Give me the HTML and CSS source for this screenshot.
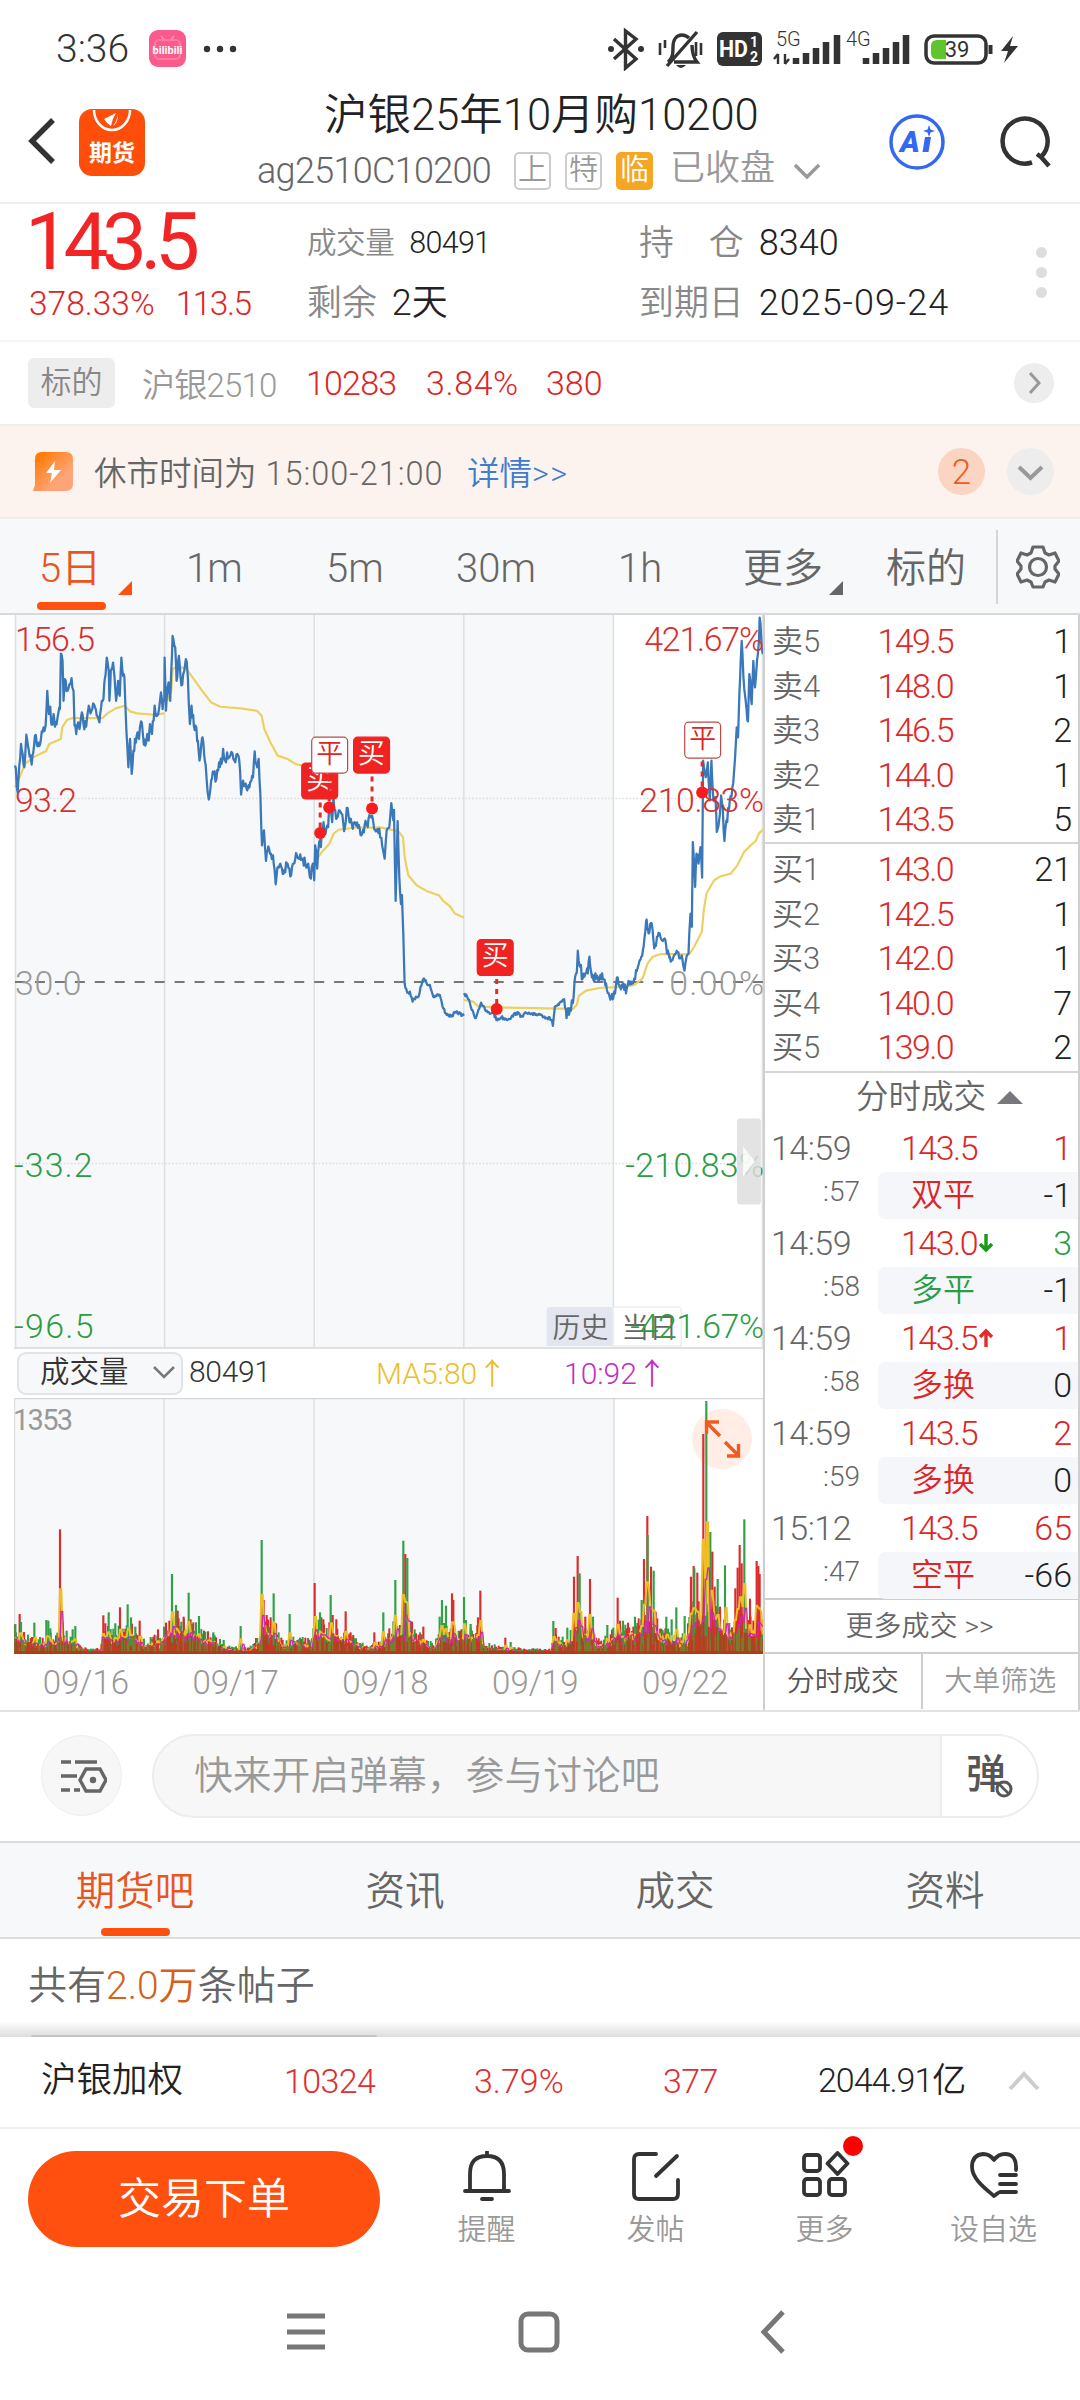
FILE: index.html
```html
<!DOCTYPE html>
<html lang="zh-CN">
<head>
  <meta charset="UTF-8">
  <title>沪银25年10月购10200</title>
  <link rel="stylesheet" href="styles.css">
</head>
<body>

<!-- Status bar -->
<div class="status">
  <span class="time">3:36</span>
  <svg class="bili" width="37" height="37" viewBox="0 0 37 37">
    <rect width="37" height="37" rx="9" fill="#fb5a8d"/>
    <path d="M12 6l4 5M25 6l-4 5" stroke="#fd8db0" stroke-width="2"/>
    <rect x="6" y="10" width="25" height="19" rx="4" fill="none" stroke="#fd7ba4" stroke-width="2"/>
    <text x="18.500" y="24" text-anchor="middle" font-size="11" font-weight="700" fill="#fff">bilibili</text>
  </svg>
  <svg class="more-dots" width="34" height="8"><g fill="#333"><circle cx="4" cy="4" r="3.200"/><circle cx="17" cy="4" r="3.200"/><circle cx="30" cy="4" r="3.200"/></g></svg>
  <svg class="sys" width="420" height="44" viewBox="600 27 420 44">
    <g fill="none" stroke="#333" stroke-width="3.400">
      <path d="M614 39l22 20-10.500 9V31l10.500 8-22 20"/>
      <path d="M668 62c5-4 5-9 5-15 0-8 4-12 9-12 3 0 5 1 7 3M692 45c0 8 1 12 5 17h-23M697 32l-30 34"/>
      <path d="M660 43v12M665 40v8M696 42v14M701 43v12" stroke-width="2.600"/>
    </g>
    <circle cx="611" cy="49" r="3" fill="#333"/><circle cx="641" cy="49" r="3" fill="#333"/>
    <path d="M676 65h10q-5 6-10 0z" fill="#333"/>
    <rect x="717" y="32" width="45" height="34" rx="6" fill="#333"/>
    <text x="719" y="57" font-size="23" font-weight="700" fill="#fff" textLength="29" lengthAdjust="spacingAndGlyphs">HD</text>
    <text x="750" y="47" font-size="14" font-weight="700" fill="#fff">1</text>
    <text x="750" y="62" font-size="14" font-weight="700" fill="#fff">2</text>
    <text x="776" y="46" font-size="20" fill="#333">5G</text>
    <text x="846" y="46" font-size="20" fill="#333">4G</text>
    <path d="M778 54v10M778 54l-4 5M785 64V54M785 64l4-5" stroke="#333" stroke-width="2.400" fill="none"/>
    <g stroke="#333" stroke-width="6.500">
      <path d="M796 64v-6M806 64V53M816 64V48M826 64V42M837 64V35"/>
      <path d="M866 64v-6M876 64V53M886 64V48M896 64V42M906 64V35"/>
    </g>
    <rect x="926" y="36" width="60" height="27" rx="8" fill="#fff" stroke="#333" stroke-width="3.500"/>
    <path d="M937 40h9v19h-9q-6 0-6-6v-7q0-6 6-6z" fill="#5fc52e"/>
    <path d="M990.500 45v9" stroke="#333" stroke-width="4"/>
    <text x="957" y="57" text-anchor="middle" font-size="22" font-weight="400" fill="#333">39</text>
    <path d="M1013 36l-12 15h7l-4 12 14-17h-8z" fill="#333"/>
  </svg>
</div>

<!-- Title -->
<header class="header">
  <svg class="back" width="30" height="52" viewBox="0 0 30 52"><path d="M25 4L4 25l21 21" fill="none" stroke="#333" stroke-width="5.500"/></svg>
  <svg class="logo" width="66" height="68" viewBox="0 0 66 68">
    <rect width="66" height="67" rx="13" fill="#ff4e0a"/>
    <path d="M15 1a18 20 0 0 0 36 0" fill="none" stroke="#fff" stroke-width="2.500"/>
    <path d="M25 10l12-6q-4 6-5 13-4-2-7-7zM39 5q-1 7-5 12 5-3 5-12z" fill="#fff"/>
    <text x="33" y="52" text-anchor="middle" font-size="23" font-weight="700" fill="#fff">期货</text>
  </svg>
  <div class="names">
    <h1>沪银25年10月购10200</h1>
    <div class="code">
      <span class="ticker">ag2510C10200</span>
      <i class="tag">上</i><i class="tag">特</i><i class="tag temp">临</i>
      <span class="closed">已收盘</span>
      <svg width="28" height="18" viewBox="0 0 28 18"><path d="M2 3l12 12L26 3" fill="none" stroke="#999" stroke-width="3.500"/></svg>
    </div>
  </div>
  <svg class="ai" width="56" height="56" viewBox="0 0 56 56">
    <circle cx="28" cy="28" r="26" fill="none" stroke="#3468f0" stroke-width="3.500"/>
    <text x="11" y="38" font-size="30" font-weight="900" font-style="italic" fill="#3468f0">A</text>
    <path d="M36 23h6l-2.500 15h-6z" fill="#3468f0"/>
    <path d="M40 11l1.500 4.500L46 17l-4.500 1.500L40 23l-1.500-4.500L34 17l4.500-1.500z" fill="#3468f0"/>
  </svg>
  <svg class="search" width="54" height="54" viewBox="0 0 54 54"><path d="M33 47.500A22.500 22.500 0 1 1 42 42l-4-3M42 42l8 9" fill="none" stroke="#333" stroke-width="4.500"/></svg>
</header>

<!-- Quote -->
<section class="quote">
  <div class="last">
    <div class="price">143.5</div>
    <div class="change"><span>378.33%</span><span class="diff">113.5</span></div>
  </div>
  <div class="facts">
    <div class="small"><label>成交量</label>80491</div>
    <div><label>剩余</label>2天</div>
  </div>
  <div class="facts wide">
    <div><label>持　仓</label>8340</div>
    <div><label>到期日</label><span class="expiry">2025-09-24</span></div>
  </div>
  <div class="kebab"><i></i><i></i><i></i></div>
</section>

<section class="underlying">
  <span class="chip">标的</span>
  <span class="uname">沪银2510</span>
  <span class="red u1">10283</span><span class="red u2">3.84%</span><span class="red">380</span>
  <svg class="go" width="40" height="40" viewBox="0 0 40 40"><circle cx="20" cy="20" r="20" fill="#ededed"/><path d="M16 10l9 10-9 10" fill="none" stroke="#999" stroke-width="3"/></svg>
</section>

<section class="notice">
  <svg width="41" height="40" viewBox="0 0 41 40">
    <defs><linearGradient id="g" x1="0" y1="0" x2="1" y2="1"><stop offset=".1" stop-color="#ff7a00"/><stop offset=".7" stop-color="#ffa478"/></linearGradient></defs>
    <path d="M9 0h24q7 0 7 7v25q0 7-7 7H0l2-6V7q0-7 7-7z" fill="url(#g)"/>
    <path d="M22 9l-9 12h6l-2 10 11-13h-7z" fill="#fff"/>
  </svg>
  <span class="msg">休市时间为 <span class="hours">15:00-21:00</span></span>
  <a class="detail">详情<span>&gt;&gt;</span></a>
  <b class="count">2</b>
  <svg width="47" height="47" viewBox="0 0 47 47"><circle cx="23.500" cy="23.500" r="23.500" fill="#ededed"/><path d="M12 19l11.500 11L35 19" fill="none" stroke="#999" stroke-width="4"/></svg>
</section>

<!-- Periods -->
<nav class="periods">
  <a class="p1 on">5日<i class="corner"></i></a>
  <a class="p2">1m</a>
  <a class="p3">5m</a>
  <a class="p4">30m</a>
  <a class="p5">1h</a>
  <a class="p6">更多<i class="corner"></i></a>
  <a class="p7">标的</a>
  <span class="gear">
    <svg width="44" height="46" viewBox="-22 -23 44 46" fill="none" stroke="#666" stroke-width="3.200" stroke-linejoin="round">
      <path d="M-5-20H5l2 6 4 2 6-2 4 8-4 5v3l4 5-4 8-6-2-4 2-2 5H-5l-2-5-4-2-6 2-4-8 4-5v-3l-4-5 4-8 6 2 4-2z"/><circle r="8.500"/>
    </svg>
  </span>
</nav>

<main class="board">
  <div class="charts">
    <svg class="trend" width="750" height="734" viewBox="0 0 750 734">
      <rect width="600" height="734" fill="#f7f8fa"/>
      <path d="M.5 0v734M150 0v734M300 0v734M450 0v734M600 0v734M749.500 0v734" stroke="#dfe0e2" stroke-width="1.600"/>
      <path d="M0 184h750M0 550h750" stroke="#dcdcdc" stroke-width="1.500" stroke-dasharray="1.500 2"/>
      <path d="M0 368h750" stroke="#777" stroke-width="2" stroke-dasharray="10 10"/>
      <g class="axis">
        <text class="up" x="0" y="36">156.5</text><text class="up" x="0" y="198">93.2</text>
        <text x="0" y="381" textLength="66">30.0</text>
        <text class="down" x="-1" y="564" textLength="78">-33.2</text><text class="down" x="-1" y="725" textLength="79">-96.5</text>
      </g>
      <g transform="translate(-14 -14) scale(.33333)" fill="none" stroke-linejoin="round">
        <g id="avg" stroke="#ecd060" stroke-width="6.500"></g>
        <g id="line" stroke="#3a78ba" stroke-width="6.800"></g>
      </g>
      <g class="axis end">
        <text class="up" x="751" y="36" textLength="120">421.67%</text><text class="up" x="751" y="198" textLength="125">210.83%</text>
        <text x="751" y="381" textLength="95">0.00%</text>
      </g>
      <g id="marks"></g>
      <path d="M537 694h62v39h-66v-35q0-4 4-4z" fill="#e3e6ee"/>
      <path d="M600 694h64q4 0 4 4v35h-68z" fill="#fff" stroke="#eee" stroke-width="1.500"/>
      <g font-size="28" fill="#666"><text x="539" y="725">历史</text><text x="608" y="725">当日</text></g>
      <g class="axis end"><text class="down" x="751" y="564" textLength="139">-210.83%</text><text class="down" x="751" y="725" textLength="134">-421.67%</text></g>
      <rect x="724" y="505" width="24" height="86" rx="3" fill="#ddd" fill-opacity=".82"/>
      <path d="M730 533l12 15-12 15z" fill="#fff" fill-opacity=".8"/>
    </svg>
    <div class="indicator">
      <span class="select">成交量<svg width="22" height="13" viewBox="0 0 22 13"><path d="M1 1l10 10L21 1" fill="none" stroke="#777" stroke-width="2.500"/></svg></span>
      <span class="vol">80491</span><span class="ma5">MA5:80<em>↑</em></span><span class="ma10">10:92<em>↑</em></span>
    </div>
    <svg class="volume" width="750" height="256" viewBox="0 0 750 256">
      <rect width="600" height="256" fill="#f7f8fa"/>
      <path d="M.5 0v256M150 0v256M300 0v256M450 0v256M600 0v256M749.500 0v256" stroke="#dfe0e2" stroke-width="1.600"/>
      <path d="M0 .5h750" stroke="#d5d6d8" stroke-width="1.500"/>
      <text x="-1" y="32" font-size="29" font-weight="400" fill="#999" textLength="60">1353</text>
      <circle cx="708" cy="41" r="30" fill="#ffede6"/>
      <g id="bars" transform="translate(-14 -18) scale(.33333)" fill="none"></g>
      <path d="M706 38l-13-13M692.500 36V24H705M711 44l14 14M713 58h11.500V46" fill="none" stroke="#f15a22" stroke-width="3.400"/>
    </svg>
    <div class="dates"><span>09/16</span><span>09/17</span><span>09/18</span><span>09/19</span><span>09/22</span></div>
  </div>

  <aside class="depth">
    <div class="levels asks">
      <p><span>卖5</span><b>149.5</b><em>1</em></p>
      <p><span>卖4</span><b>148.0</b><em>1</em></p>
      <p><span>卖3</span><b>146.5</b><em>2</em></p>
      <p><span>卖2</span><b>144.0</b><em>1</em></p>
      <p><span>卖1</span><b>143.5</b><em>5</em></p>
    </div>
    <div class="levels bids">
      <p><span>买1</span><b>143.0</b><em>21</em></p>
      <p><span>买2</span><b>142.5</b><em>1</em></p>
      <p><span>买3</span><b>142.0</b><em>1</em></p>
      <p><span>买4</span><b>140.0</b><em>7</em></p>
      <p><span>买5</span><b>139.0</b><em>2</em></p>
    </div>
    <div class="ticks">
      <h3>分时成交<i></i></h3>
      <div class="tick"><span>14:59</span><b>143.5</b><em class="red">1</em></div>
      <div class="tick sub"><span>:57</span><p><b>双平</b><em>-1</em></p></div>
      <div class="tick"><span>14:59</span><b>143.0</b><svg class="dir" width="16" height="20" viewBox="0 0 16 20"><path d="M8 1v16M2 11l6 6 6-6" fill="none" stroke="#189a18" stroke-width="3.400"/></svg><em class="green">3</em></div>
      <div class="tick sub"><span>:58</span><p><b class="green">多平</b><em>-1</em></p></div>
      <div class="tick"><span>14:59</span><b>143.5</b><svg class="dir" width="16" height="20" viewBox="0 0 16 20"><path d="M8 19V3M2 9l6-6 6 6" fill="none" stroke="#e22b2b" stroke-width="3.400"/></svg><em class="red">1</em></div>
      <div class="tick sub"><span>:58</span><p><b>多换</b><em>0</em></p></div>
      <div class="tick"><span>14:59</span><b>143.5</b><em class="red">2</em></div>
      <div class="tick sub"><span>:59</span><p><b>多换</b><em>0</em></p></div>
      <div class="tick"><span>15:12</span><b>143.5</b><em class="red">65</em></div>
      <div class="tick sub"><span>:47</span><p><b>空平</b><em>-66</em></p></div>
    </div>
    <div class="all">更多成交 &gt;&gt;</div>
    <div class="switch"><span class="on">分时成交</span><span>大单筛选</span></div>
  </aside>
</main>

<!-- Danmaku input -->
<section class="danmu">
  <span class="settings"><svg width="46" height="36" viewBox="0 0 46 36" fill="none" stroke="#666" stroke-width="3.400"><path d="M0 4h10M14 4h22M0 18h16M0 32h9M13 32h6M25 11h14l6 11-6 11H25l-6-11z"/><circle cx="32" cy="22" r="1.500"/></svg></span>
  <div class="pill">
    <span class="hint">快来开启弹幕，参与讨论吧</span>
    <span class="off">弹<svg width="20" height="20" viewBox="0 0 20 20"><circle cx="10" cy="10" r="7" fill="#fff" stroke="#555" stroke-width="3"/><path d="M5 5l10 10" stroke="#555" stroke-width="2.600"/></svg></span>
  </div>
</section>

<nav class="forum">
  <a class="on">期货吧</a><a>资讯</a><a>成交</a><a>资料</a>
</nav>
<section class="posts">共有<span>2.0万</span>条帖子<i class="fade"></i></section>

<!-- Index strip -->
<section class="strip">
  <span class="s1">沪银加权</span><span class="s2">10324</span><span class="s3">3.79%</span><span class="s4">377</span><span class="s5">2044.91亿</span>
  <svg width="32" height="20" viewBox="0 0 32 20"><path d="M2 18L16 3l14 15" fill="none" stroke="#ccc" stroke-width="4"/></svg>
</section>

<footer class="actions">
  <button>交易下单</button>
  <div class="act"><svg width="50" height="52" viewBox="0 0 50 52"><path d="M8 40V23Q8 5 25 5t17 18v17M3 40h44M25 1v4M20 48h10"/></svg>提醒</div>
  <div class="act"><svg width="50" height="52" viewBox="0 0 50 52"><path d="M25 3H8Q3 3 3 8v35q0 5 5 5h34q5 0 5-5V29M46 5L25 25"/></svg>发帖</div>
  <div class="act"><svg width="50" height="52" viewBox="0 0 50 52"><rect x="4" y="4" width="16" height="16" rx="3"/><rect x="4" y="28" width="16" height="16" rx="3"/><rect x="29" y="28" width="16" height="16" rx="3"/><path d="M37.500 2l10 10.500-10 10.500-10-10.500z"/></svg>更多<i class="dot"></i></div>
  <div class="act"><svg width="50" height="52" viewBox="0 0 50 52"><path d="M47 19Q48 3 36 3q-7 0-11 6-4-6-11-6Q3 4 3 16c0 12 14 22 22 29l4-3M31 24h16M31 33h16M31 41h16"/></svg>设自选</div>
</footer>

<div class="sysnav">
  <svg width="506" height="48" viewBox="0 0 506 48" fill="none" stroke="#777" stroke-width="5">
    <path d="M4 8h38M4 24h38M4 39h38"/><rect x="238" y="6" width="36" height="36" rx="7"/><path d="M500 4L481 24l19 20"/>
  </svg>
</div>

<script src="chart.js"></script>
</body>
</html>
```

FILE: styles.css
```css
* {
  box-sizing: border-box;
}

body {
  width: 1080px;
  margin: 0;
  background: #fff;
  color: #222;
  font-family: Roboto, "Noto Sans CJK SC", sans-serif;
  font-weight: 350;
  font-size: 34px;
}

h1, h3, p {
  margin: 0;
  font-weight: 350;
}

i, em {
  font-style: normal;
}

b {
  font-weight: 350;
}

svg {
  flex: none;
}

.red { color: #dc2626; }
.green { color: #2c9c44 !important; }

/* status bar */
.status {
  display: flex;
  align-items: center;
  height: 97px;
  padding: 0 60px 0 56px;
}

.time {
  width: 93px;
  font-size: 39px;
  color: #333;
}

.more-dots {
  margin: 0 auto 0 17px;
}

/* header */
.header {
  display: flex;
  align-items: flex-start;
  height: 107px;
  border-bottom: 2px solid #eee;
}

.back { margin: 19px 19px 0 28px; }
.logo { margin: 12px 0 0 2px; }

.names {
  width: 744px;
  padding-left: 112px;
}

.names h1 {
  margin-left: 67px;
  height: 50px;
  line-height: 37px;
  font-size: 43.500px;
  color: #222;
  white-space: nowrap;
}

.code {
  display: flex;
  align-items: center;
  height: 48px;
  color: #666;
}

.ticker {
  width: 257px;
  font-size: 36px;
  letter-spacing: -.7px;
}

.tag {
  width: 37px;
  height: 38px;
  margin-right: 14px;
  border: 2px solid #ccc;
  border-radius: 5px;
  line-height: 33px;
  text-align: center;
  font-size: 29px;
  color: #999;
}

.tag.temp {
  margin-right: 17px;
  border-color: #f5a623;
  background: #f5a623;
  color: #fff;
}

.closed {
  width: 123px;
  line-height: 44px;
  padding-bottom: 4px;
  font-size: 35px;
  color: #999;
}

.ai { margin-top: 17px; }
.search { margin: 18px 0 0 54px; }

/* quote */
.quote {
  display: flex;
  height: 138px;
  border-bottom: 2px solid #f4f4f4;
}

.last {
  width: 307px;
  padding-left: 25px;
}

.price {
  height: 73px;
  line-height: 76px;
  font-size: 80px;
  font-weight: 450;
  letter-spacing: -6.500px;
  color: #f12525;
}

.change {
  display: flex;
  gap: 21px;
  padding-left: 4px;
  line-height: 54px;
  font-size: 33.500px;
  color: #dc2626;
}

.diff { letter-spacing: -1.500px; }

.facts {
  width: 332px;
  padding-top: 9px;
}

.facts.wide { width: 391px; }

.facts div {
  height: 60px;
  line-height: 60px;
  font-size: 36px;
  white-space: nowrap;
}

.facts .small { font-size: 30.500px; letter-spacing: -.7px; }
.facts .small label { letter-spacing: -.5px; }
.facts label { margin-right: 15px; color: #888; font-size: .97em; }
.expiry { letter-spacing: 1px; }

.kebab {
  display: flex;
  flex-direction: column;
  gap: 9px;
  padding: 43px 0 0 6px;
}

.kebab i {
  width: 11px;
  height: 11px;
  border-radius: 50%;
  background: #ddd;
}

.underlying {
  display: flex;
  align-items: center;
  height: 84px;
  padding: 0 26px 0 28px;
  border-bottom: 2px solid #eee;
}

.chip {
  width: 87px;
  height: 50px;
  margin-right: 27px;
  border-radius: 6px;
  background: #ededed;
  line-height: 49px;
  text-align: center;
  font-size: 31px;
  color: #888;
}

.uname { width: 164px; font-size: 33px; letter-spacing: -.8px; color: #999; }
.u1 { width: 120px; letter-spacing: -.8px; }
.u2 { width: 120px; letter-spacing: .6px; }
.go { margin-left: auto; }

/* notice */
.notice {
  display: flex;
  align-items: center;
  height: 93px;
  padding: 0 26px 0 33px;
  background: #fdf3ee;
  border-bottom: 2px solid #eee;
}

.msg, .detail { padding-bottom: 3px; }
.msg { width: 373px; margin-left: 20px; color: #666; font-size: 32.500px; white-space: nowrap; }
.hours { margin-left: 1px; letter-spacing: 1px; }
.detail { color: #3d7dcc; font-size: 32.500px; }
.detail span { letter-spacing: 1.500px; }

.count {
  width: 47px;
  height: 47px;
  margin: 0 22px 0 auto;
  border-radius: 50%;
  background: #fbd5c2;
  line-height: 49px;
  text-align: center;
  color: #f15a22;
  font-size: 35px;
}

/* periods */
.periods {
  display: flex;
  height: 96px;
  background: #f7f8fa;
  border-bottom: 2px solid #d8d9dc;
  font-size: 40px;
  color: #666;
}

.periods a {
  position: relative;
  line-height: 99px;
  white-space: nowrap;
}

.p1 { width: 147px; padding-left: 39px; }
.p2 { width: 139px; padding-left: 39px; letter-spacing: -1px; }
.p3 { width: 130px; padding-left: 40px; }
.p4 { width: 163px; padding-left: 40px; }
.p5 { width: 164px; padding-left: 39px; }
.p6 { width: 143px; }
.p7 { width: 110px; }

.periods .on { color: #e8551f; }

.periods .on::after {
  content: "";
  position: absolute;
  left: 37px;
  bottom: 3px;
  width: 69px;
  height: 8px;
  border-radius: 5px;
  background: #ff500f;
}

.corner {
  position: absolute;
  left: 86px;
  top: 62px;
  border-left: 14px solid transparent;
  border-bottom: 14px solid #666;
}

.on .corner { left: 118px; border-bottom-color: #ff500f; }

.gear {
  width: 82px;
  height: 74px;
  margin-top: 11px;
  padding: 14px 0 0 18px;
  border-left: 2px solid #d5d6d8;
}

/* charts */
.board {
  display: flex;
  height: 1097px;
  border-bottom: 2px solid #e2e2e2;
}

.charts {
  width: 763px;
  padding-left: 14px;
}

.charts svg {
  display: block;
}

.trend { border-bottom: 2px solid #dfe0e2; }

.axis text {
  font-size: 34px;
  letter-spacing: -.8px;
  fill: #999;
}

.axis.end text { text-anchor: end; letter-spacing: 0; }
.axis .up { fill: #d82f2f; }
.axis .down { fill: #2c9c44; }

.indicator {
  display: flex;
  align-items: center;
  height: 49px;
  padding-bottom: 1px;
  line-height: 40px;
  font-size: 30px;
  color: #333;
}

.indicator > span { padding-bottom: 2px; }

.select {
  display: flex;
  align-items: center;
  gap: 24px;
  width: 166px;
  height: 43px;
  margin: 0 6px 0 3px;
  padding-left: 21px;
  border: 2px solid #e1e3e8;
  border-radius: 9px;
  background: #f7f8fa;
  font-size: 29.500px;
}

.vol { width: 187px; letter-spacing: -.3px; }
.ma5 { width: 188px; color: #e9bf2c; }
.ma10 { color: #c030c0; }
.indicator em { font-family: "Noto Sans CJK SC"; letter-spacing: -8px; }

.dates {
  display: flex;
  height: 56px;
  line-height: 57px;
  color: #999;
}

.dates span {
  width: 150px;
  padding-right: 6px;
  text-align: center;
  font-size: 33px;
}

/* depth */
.depth {
  width: 317px;
  border: solid #cfcfcf;
  border-width: 0 2px;
}

.levels {
  height: 229px;
  border-bottom: 2px solid #d5d5d5;
}

.asks { padding-top: 4px; }
.bids { padding-top: 3px; }

.levels p {
  display: flex;
  height: 44.500px;
  line-height: 45px;
}

.levels span { width: 71px; padding-left: 7px; color: #666; font-size: 31px; }
.levels b { width: 117px; text-align: right; color: #dc2a2a; letter-spacing: -1.600px; }
.levels em { width: 119px; text-align: right; }

.ticks {
  height: 527px;
  border-bottom: 2px solid #cfcfcf;
}

.ticks h3 {
  display: flex;
  align-items: center;
  height: 51px;
  padding: 0 0 2px 91px;
  line-height: 49px;
  font-size: 32.500px;
  color: #666;
}

.ticks h3 i {
  margin-left: 11px;
  border: solid transparent;
  border-width: 0 13px 13px;
  border-bottom-color: #77777c;
}

.tick {
  position: relative;
  display: flex;
  height: 48px;
  line-height: 49px;
}

.tick > span { width: 95px; padding-left: 6px; color: #666; letter-spacing: -.5px; }
.tick > b { width: 117px; text-align: right; color: #dc2626; letter-spacing: -1.500px; }
.tick > em { margin-left: auto; padding-right: 6px; }

.dir {
  position: absolute;
  left: 213px;
  top: 14px;
}

.tick.sub { height: 47px; line-height: 46px; }
.tick.sub > span { line-height: 40px; font-size: 28px; text-align: right; letter-spacing: 0; }

.sub p {
  display: flex;
  justify-content: space-between;
  width: 200px;
  margin-left: 18px;
  padding: 0 6px 0 33px;
  border-radius: 7px 0 0 7px;
  background: #f5f6f9;
}

.sub p b { color: #dc2626; font-size: 32px; }

.all {
  height: 54px;
  border-bottom: 2px solid #cfcfcf;
  line-height: 53px;
  padding-right: 4px;
  text-align: center;
  font-size: 28px;
  color: #666;
}

.switch { display: flex; }

.switch span {
  flex: 1;
  height: 55px;
  line-height: 56px;
  text-align: center;
  font-size: 28px;
  color: #999;
}

.switch .on {
  border-right: 2px solid #cfcfcf;
  color: #555;
}

/* danmaku */
.danmu {
  display: flex;
  align-items: center;
  gap: 30px;
  height: 131px;
  padding: 0 41px 2px;
  border-bottom: 2px solid #dcdde0;
}

.settings {
  width: 81px;
  height: 81px;
  padding: 22px 0 0 19px;
  border: 1px solid #eee;
  border-radius: 50%;
  background: #f7f7f7;
}

.pill {
  display: flex;
  width: 887px;
  height: 84px;
  border: 2px solid #ededed;
  border-radius: 42px;
  background: #f7f7f7;
  overflow: hidden;
}

.hint {
  width: 786px;
  padding-left: 40px;
  line-height: 80px;
  font-size: 38.800px;
  color: #999;
}

.off {
  position: relative;
  flex: 1;
  padding-left: 24px;
  border-left: 2px solid #ededed;
  background: #fff;
  line-height: 78px;
  font-size: 40px;
  font-weight: 500;
  color: #555;
}

.off svg {
  position: absolute;
  left: 52px;
  top: 43px;
}

.forum {
  display: flex;
  height: 96px;
  background: #f7f8fa;
  border-bottom: 2px solid #dcdde0;
}

.forum a {
  position: relative;
  width: 270px;
  line-height: 97px;
  text-align: center;
  font-size: 39.500px;
  color: #666;
}

.forum .on { color: #e8551f; }

.forum .on::after {
  content: "";
  position: absolute;
  left: 101px;
  bottom: 1px;
  width: 69px;
  height: 8px;
  border-radius: 4px;
  background: #ff500f;
}

.posts {
  position: relative;
  height: 98px;
  padding-left: 28px;
  line-height: 95px;
  font-size: 39px;
  color: #666;
}

.posts span { color: #d4601c; }

.fade {
  position: absolute;
  left: 0;
  bottom: 0;
  width: 1080px;
  height: 16px;
  background: linear-gradient(#fff, #ddd);
}

.fade::after {
  content: "";
  position: absolute;
  left: 31px;
  bottom: 0;
  width: 346px;
  height: 2px;
  border-radius: 3px 3px 0 0;
  background: #c4c4c4;
}

/* index strip */
.strip {
  display: flex;
  align-items: center;
  height: 92px;
  padding: 0 0 2px 41px;
  border-bottom: 2px solid #eee;
  line-height: 60px;
  letter-spacing: -.6px;
}

.s1 { width: 243px; padding-bottom: 3px; font-size: 35.500px; letter-spacing: 0; }
.s2 { width: 190px; color: #dc3030; }
.s3 { width: 189px; color: #dc3030; letter-spacing: 0; }
.s4 { width: 155px; color: #dc3030; }
.s5 { width: 190px; padding-bottom: 3px; letter-spacing: -1px; }

.actions {
  display: flex;
  height: 142px;
  padding: 22px 0 0 28px;
}

.actions button {
  width: 352px;
  height: 96px;
  margin-right: 22px;
  border: none;
  border-radius: 49px;
  background: #ff500f;
  font: inherit;
  font-size: 43px;
  line-height: 88px;
  color: #fff;
}

.act {
  position: relative;
  display: flex;
  flex-direction: column;
  align-items: center;
  width: 169px;
  font-size: 29px;
  line-height: 54px;
  color: #999;
}

.act svg {
  fill: none;
  stroke: #333;
  stroke-width: 3.800;
  stroke-linecap: round;
  stroke-linejoin: round;
}

.dot {
  position: absolute;
  left: 103px;
  top: -15px;
  width: 20px;
  height: 20px;
  border-radius: 50%;
  background: #f00;
}

.sysnav {
  padding: 37px 0 0 283px;
}
```

FILE: chart.js
```js
// series use a grid of three units per pixel
var NS = "http://www.w3.org/2000/svg";
var seed = 7;
function rnd() {
  seed = (seed * 16807) % 2147483647;
  return seed / 2147483647;
}
function add(parent, tag, attrs, text) {
  var el = document.createElementNS(NS, tag);
  for (var k in attrs) el.setAttribute(k, attrs[k]);
  if (text) el.textContent = text;
  document.getElementById(parent).appendChild(el);
}

var price = [
  "42,495 50,575 60,430 70,500 76,402 92,492 102,405 108,435 120,415 128,380 134,375 139,270 144,340 148,318 152,372 158,340 162,378 170,350 177,325 180,158 185,180 188,300 192,235 200,270 206,250 212,232 218,270 221,375 226,400 232,365 236,385 243,335 248,370 256,378 264,315 272,330 280,312 288,345 296,365 303,300 308,295 312,235 318,170 324,210 326,300 330,210 337,185 341,225 346,300 352,240 357,285 362,170 367,225 371,230 377,390 383,500 388,415 393,520 398,450 408,405 415,415 421,362 427,405 434,435 440,400 444,420 448,370 454,400 462,315 470,345 481,275 486,325 491,300 492,170 496,330 504,245 509,300 516,105 524,140 528,240 535,165 540,230 545,252 551,210 556,175 562,230 568,370 573,315 580,375 585,375 592,420 597,480 606,410 613,480 619,545 625,597 632,540 640,520 648,535 656,485 663,490 668,445 674,480 680,455 688,468 696,458 702,480 708,462 714,465 719,510 722,582 728,540 742,565 753,540 758,530 763,452 768,490 775,475 780,580 785,735 791,690 797,782 804,738 812,760 818,765 826,852 833,800 840,790 850,820 862,790 870,828 880,790 890,765 900,762 908,775 916,795 924,790 932,835 938,790 942,840 945,735 951,805 957,725 962,740 970,665 976,700 984,680 988,610 996,665 1000,590 1008,655 1016,630 1024,640 1032,692 1040,622 1046,650 1052,655 1058,685 1066,668 1074,682 1084,705 1094,672 1103,680 1111,648 1120,668 1130,690 1138,685 1144,712 1154,775 1160,690 1168,680 1174,608 1180,660 1182,628 1187,902 1193,662 1198,830 1203,912 1206,885 1210,1000 1214,1150 1222,1178 1230,1175 1238,1205 1248,1190 1256,1190 1262,1160 1272,1135 1280,1150 1290,1155 1300,1190 1310,1185 1320,1185 1328,1220 1338,1240 1354,1250 1366,1238 1380,1240 1392,1248",
  "1392,1185 1402,1190 1408,1200 1416,1230 1428,1255 1436,1230 1444,1208 1456,1230 1470,1242 1480,1235 1490,1260 1505,1252 1520,1258 1535,1252 1550,1238 1565,1248 1580,1240 1600,1245 1620,1242 1635,1250 1657,1260 1660,1278 1666,1220 1678,1215 1694,1198 1701,1255 1712,1225 1720,1210 1727,1130 1732,1118 1735,1052 1742,1100 1750,1135 1758,1120 1765,1120 1770,1070 1775,1115 1782,1140 1788,1120 1798,1145 1808,1120 1820,1150 1828,1180 1842,1192 1850,1155 1855,1132 1862,1160 1872,1150 1880,1180 1892,1145 1905,1135 1916,1100 1926,1070 1933,1040 1942,958 1948,1000 1955,968 1960,990 1965,1045 1973,1010 1981,1000 1988,1020 1996,1015 2003,1060 2012,1070 2020,1080 2030,1060 2040,1075 2050,1080 2056,1112 2062,1070 2068,1060 2074,940 2078,980 2081,725 2088,860 2092,760 2098,790 2104,740 2109,832 2112,480 2120,530 2126,485 2132,600 2137,480 2143,600 2149,590 2153,695 2160,660 2166,585 2171,620 2176,722 2182,660 2190,625 2200,560 2206,500 2213,380 2217,410 2221,280 2225,180 2228,120 2233,225 2240,300 2247,362 2251,220 2258,310 2263,180 2268,260 2274,180 2280,120 2282,50 2288,130 2292,160"
];
var avg = [
  "42,560 60,520 72,490 100,468 135,452 145,430 180,415 184,380 198,358 215,352 305,352 320,338 345,323 372,315 388,332 410,338 460,342 492,338",
  "500,300 512,270 516,205 528,198 555,202 580,235 605,270 632,305 660,318 720,323 770,330 784,345 792,385 810,425 832,465 862,475 885,490 905,495 935,497",
  "945,785 965,755 988,730 1000,700 1015,688 1060,682 1140,681 1195,692 1209,710 1214,770 1225,825 1250,855 1280,872 1318,886 1330,902 1350,918 1365,940 1392,952",
  "1392,1200 1420,1205 1436,1220 1520,1223 1720,1227 1732,1215 1738,1188 1760,1172 1800,1164 1880,1160 1905,1155 1930,1135 1945,1090 1960,1070 1985,1062 2070,1063 2085,1040 2108,995 2114,930 2122,880 2145,840 2165,828 2195,820 2215,795 2235,755 2255,735 2270,722 2280,698 2292,688"
];

avg.forEach(function (p) { add("avg", "polyline", { points: p }); });

// small wiggles between the traded points
price.forEach(function (p) {
  var pts = p.split(" ").map(function (s) { return s.split(",").map(Number); });
  var out = [pts[0]];
  for (var i = 1; i < pts.length; i++) {
    var a = pts[i - 1], b = pts[i];
    var calm = a[0] > 1200 && a[0] < 1690 ? 10 : 32;
    for (var x = a[0] + 2.5; x < b[0] - 1; x += 2.5) {
      var t = (x - a[0]) / (b[0] - a[0]);
      out.push([x, Math.round(a[1] + (b[1] - a[1]) * t + (rnd() - 0.5) * calm)]);
    }
    out.push(b);
  }
  add("line", "polyline", { points: out.join(" ") });
});

// trade marks: box x, box y, dot x, dot y, label
[
  [287, 148, 306, 218.5, "买"],
  [297, 122, 315, 193, "平"],
  [339, 122, 358, 194, "买"],
  [463, 325, 483, 395, "买"],
  [671, 107, 689, 178, "平"]
].forEach(function (m) {
  var buy = m[4] == "买";
  add("marks", "path", { d: "M" + m[2] + " " + (m[1] + 40) + "V" + m[3], stroke: "#e22b2b", "stroke-width": 3, "stroke-dasharray": "5 5" });
  add("marks", "rect", { x: m[0] + 0.5, y: m[1] + 0.5, width: 36, height: 36, rx: 4, fill: buy ? "#f12222" : "#fff", stroke: buy ? "#f12222" : "#b94a4a", "stroke-width": 1.2 });
  add("marks", "text", { x: m[0] + 18.5, y: m[1] + 26, "text-anchor": "middle", "font-size": 27, fill: buy ? "#fff" : "#dc2626" }, m[4]);
  add("marks", "circle", { cx: m[2], cy: m[3], r: 6, fill: "#f51d1d" });
});

// volume
var base = 822;
var env = [[42,80],[80,60],[120,48],[150,60],[165,40],[180,100],[200,70],[240,25],[262,10],[303,10],[308,90],[345,75],[400,90],[430,40],[480,55],[500,100],[540,120],[590,90],[640,60],[680,20],[748,12],[780,60],[795,120],[830,85],[848,35],[880,50],[935,40],[945,110],[1000,95],[1050,60],[1100,22],[1140,40],[1180,90],[1230,100],[1260,60],[1305,25],[1318,90],[1360,80],[1440,80],[1456,28],[1530,15],[1570,10],[1652,8],[1660,70],[1700,40],[1728,110],[1770,90],[1790,40],[1830,60],[1850,90],[1930,110],[1965,110],[1985,80],[2060,50],[2070,140],[2110,200],[2160,120],[2190,90],[2220,150],[2265,100],[2280,130],[2292,90]];
var peaks = [[46,732,0],[59,702,1],[63,726,0],[103,728,0],[139,720,0],[145,722,0],[151,745,0],[180,448,1],[200,752,0],[218,748,0],[226,738,0],[310,706,1],[316,730,1],[326,697,0],[346,730,0],[360,682,1],[383,673,0],[393,712,0],[406,740,0],[419,722,1],[474,748,1],[498,728,1],[516,582,0],[528,675,0],[533,692,1],[551,710,1],[566,638,0],[574,732,0],[597,708,0],[640,757,0],[671,780,0],[722,738,0],[785,480,0],[791,660,1],[800,705,1],[821,640,0],[828,730,1],[869,702,0],[944,609,1],[960,697,0],[970,718,1],[992,645,0],[998,705,1],[1009,718,1],[1037,694,1],[1123,757,1],[1150,697,0],[1186,600,0],[1210,482,0],[1216,522,1],[1222,534,0],[1270,740,1],[1319,710,0],[1326,660,0],[1338,677,0],[1356,640,1],[1360,660,1],[1392,651,0],[1398,720,0],[1412,732,0],[1434,712,1],[1441,632,1],[1516,773,1],[1532,786,0],[1660,723,0],[1667,744,1],[1702,743,0],[1722,590,1],[1733,528,1],[1739,580,0],[1756,710,1],[1770,597,1],[1779,710,0],[1822,735,0],[1853,653,1],[1869,722,0],[1905,710,0],[1925,660,0],[1932,537,1],[1942,408,1],[1943,465,0],[1953,560,1],[1961,572,0],[1967,695,1],[1999,710,0],[2015,718,0],[2029,682,0],[2054,708,0],[2073,590,1],[2081,558,1],[2083,565,0],[2092,578,1],[2110,162,1],[2119,63,0],[2131,456,0],[2137,515,1],[2144,620,1],[2153,597,0],[2160,680,1],[2175,556,0],[2206,625,1],[2213,563,1],[2219,495,1],[2225,550,1],[2233,418,0],[2250,656,1],[2270,543,1],[2275,558,1],[2279,582,1],[2287,720,0]];
function level(x) {
  for (var i = 1; i < env.length; i++) {
    if (x <= env[i][0]) {
      var a = env[i - 1], b = env[i];
      return a[1] + (b[1] - a[1]) * (x - a[0]) / (b[0] - a[0]);
    }
  }
  return 80;
}
function peakNear(x, from, w) {
  var h = 0;
  peaks.forEach(function (p) {
    var d = x - p[0];
    if (d >= from && d <= w) h = Math.max(h, base - p[1]);
  });
  return h;
}
var colors = ["#31a047", "#dc2c2c"];
var front = ["", "", ""], y5 = [], y10 = [];
for (var x = 44; x < 2291; x += 4) {
  var h = level(x);
  var v = 8 + h * (0.4 + 0.6 * rnd());
  add("bars", "path", { d: "M" + x + " " + base + "v" + -v.toFixed(0), stroke: colors[rnd() < 0.5 ? 0 : 1], "stroke-width": 6 });
  front[Math.floor(rnd() * 3)] += "M" + (x + 2) + " " + base + "v" + -(4 + h * (0.22 + 0.36 * rnd())).toFixed(0);
  y5.push(x + "," + (base - Math.max(h * (0.4 + 0.25 * rnd()), peakNear(x, -2, 5) * 0.52)).toFixed(0));
  y10.push(x + "," + (base - Math.max(h * (0.35 + 0.25 * rnd()), peakNear(x, 3, 10) * 0.34)).toFixed(0));
}
peaks.forEach(function (p) {
  add("bars", "path", { d: "M" + p[0] + " " + base + "V" + p[1], stroke: colors[p[2]], "stroke-width": 6.5 });
});
add("bars", "polyline", { points: y5.join(" "), stroke: "#efbd26", "stroke-width": 6 });
add("bars", "polyline", { points: y10.join(" "), stroke: "#cc2bb0", "stroke-width": 4 });
["#a04a1c", "#7d7a2c", "#c23a26"].forEach(function (c, i) {
  add("bars", "path", { d: front[i], stroke: c, "stroke-width": 4.5 });
});
add("bars", "path", { d: "M42 818H2292", stroke: "#b03a1e", "stroke-width": 8 });
```
